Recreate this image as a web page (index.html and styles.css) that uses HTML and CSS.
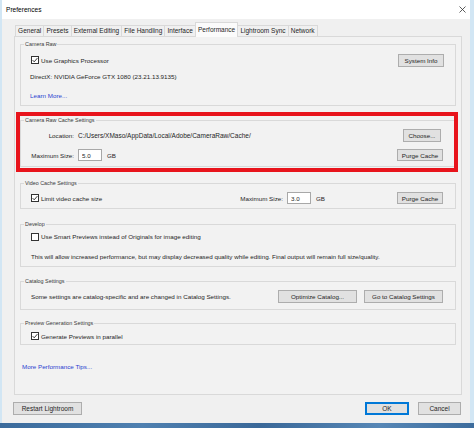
FILE: index.html
```html
<!DOCTYPE html>
<html>
<head>
<meta charset="utf-8">
<link rel="stylesheet" href="styles.css">
</head>
<body>
<div class="screen">
  <div class="window">
    <div class="titlebar">
      <span class="title">Preferences</span>
      <svg class="close" width="7" height="7" viewBox="0 0 7 7"><path d="M0.5 0.5 L6.5 6.5 M6.5 0.5 L0.5 6.5" stroke="#333" stroke-width="0.8" fill="none"/></svg>
    </div>
    <div class="client">
      <div class="tabs">
        <div class="tab">General</div>
        <div class="tab">Presets</div>
        <div class="tab">External Editing</div>
        <div class="tab">File Handling</div>
        <div class="tab">Interface</div>
        <div class="tab active">Performance</div>
        <div class="tab">Lightroom Sync</div>
        <div class="tab">Network</div>
      </div>
      <div class="panel">
        <fieldset class="group g1">
          <legend>Camera Raw</legend>
          <div class="row r1">
            <label class="check"><svg class="box" width="8" height="8" viewBox="0 0 8 8"><rect x="0.5" y="0.5" width="7" height="7" fill="#fff" stroke="#333"/><path d="M1.6 4.1 L3.2 5.8 L6.4 2.1" stroke="#222" stroke-width="0.9" fill="none"/></svg>Use Graphics Processor</label>
            <span class="spacer"></span>
            <button class="btn w46">System Info</button>
          </div>
          <div class="row r2">DirectX: NVIDIA GeForce GTX 1080 (23.21.13.9135)</div>
          <div class="row r3"><a class="link">Learn More...</a></div>
        </fieldset>

        <fieldset class="group g2">
          <legend>Camera Raw Cache Settings</legend>
          <div class="row rc1">
            <span class="lbl">Location:</span>
            <span class="path">C:/Users/XMaso/AppData/Local/Adobe/CameraRaw/Cache/</span>
            <span class="spacer"></span>
            <button class="btn w38 choose">Choose...</button>
          </div>
          <div class="row rc2">
            <span class="lbl">Maximum Size:</span>
            <input class="field" type="text" value="5.0" readonly>
            <span class="unit">GB</span>
            <span class="spacer"></span>
            <button class="btn w46 purge">Purge Cache</button>
          </div>
        </fieldset>

        <fieldset class="group g3">
          <legend>Video Cache Settings</legend>
          <div class="row rv">
            <label class="check"><svg class="box" width="8" height="8" viewBox="0 0 8 8"><rect x="0.5" y="0.5" width="7" height="7" fill="#fff" stroke="#333"/><path d="M1.6 4.1 L3.2 5.8 L6.4 2.1" stroke="#222" stroke-width="0.9" fill="none"/></svg>Limit video cache size</label>
            <span class="spacer"></span>
            <span class="vlbl">Maximum Size:</span>
            <input class="field" type="text" value="3.0" readonly>
            <span class="unit vunit">GB</span>
            <button class="btn w46 purge">Purge Cache</button>
          </div>
        </fieldset>

        <fieldset class="group g4">
          <legend>Develop</legend>
          <div class="row rd1">
            <label class="check"><svg class="box" width="8" height="8" viewBox="0 0 8 8"><rect x="0.5" y="0.5" width="7" height="7" fill="#fff" stroke="#333"/></svg>Use Smart Previews instead of Originals for image editing</label>
          </div>
          <div class="row rd2">This will allow increased performance, but may display decreased quality while editing. Final output will remain full size/quality.</div>
        </fieldset>

        <fieldset class="group g5">
          <legend>Catalog Settings</legend>
          <div class="row rk">
            <span>Some settings are catalog-specific and are changed in Catalog Settings.</span>
            <span class="spacer"></span>
            <button class="btn w79">Optimize Catalog...</button>
            <button class="btn w79 goto">Go to Catalog Settings</button>
          </div>
        </fieldset>

        <fieldset class="group g6">
          <legend>Preview Generation Settings</legend>
          <div class="row rp">
            <label class="check"><svg class="box" width="8" height="8" viewBox="0 0 8 8"><rect x="0.5" y="0.5" width="7" height="7" fill="#fff" stroke="#333"/><path d="M1.6 4.1 L3.2 5.8 L6.4 2.1" stroke="#222" stroke-width="0.9" fill="none"/></svg>Generate Previews in parallel</label>
          </div>
        </fieldset>

        <div class="tips"><a class="link">More Performance Tips...</a></div>
      </div>
      <div class="footer">
        <button class="btn restart">Restart Lightroom</button>
        <span class="spacer"></span>
        <button class="btn ok">OK</button>
        <button class="btn cancel">Cancel</button>
      </div>
    </div>
  </div>
  <div class="taskbar"></div>
  <div class="highlight"></div>
</div>
</body>
</html>
```

FILE: styles.css
```css
* { box-sizing: border-box; }
html, body { margin: 0; padding: 0; }
body {
  font-family: "Liberation Sans", Arial, sans-serif;
  font-size: 6.25px;
  color: #1e1e1e;
  background: #d2e6f4;
}
.screen {
  position: relative;
  width: 474px;
  height: 428px;
  overflow: hidden;
  background: #d2e6f4;
}
.window {
  margin-left: 2px;
  width: 468px;
  height: 423px;
  background: #f0f0f0;
}
.titlebar {
  height: 19px;
  background: #ffffff;
  display: flex;
  align-items: center;
  padding: 0 4px 0 4px;
}
.title { font-size: 6.6px; color: #000; }
.close { margin-left: auto; }
.client {
  height: 404px;
  padding: 3px 8px 0 12px;
}
.tabs {
  display: flex;
  align-items: flex-end;
  height: 14px;
  padding-left: 1px;
}
.tab {
  height: 11px;
  line-height: 10px;
  font-size: 6.5px;
  padding: 0 2.1px;
  border: 1px solid #d9d9d9;
  border-bottom: none;
  margin-left: -1px;
  background: #f0f0f0;
  white-space: nowrap;
  position: relative;
}
.tab:first-child { margin-left: 0; }
.tab.active {
  height: 15px;
  line-height: 13px;
  margin-bottom: -1px;
  background: #fbfbfb;
  z-index: 2;
}
.panel {
  position: relative;
  z-index: 1;
  height: 359px;
  border: 1px solid #d9d9d9;
  background: #f2f2f2;
  padding: 3px 5px 0 5px;
}
.group {
  margin: 0;
  padding: 0 0 0 0;
  border: 1px solid #d9d9d9;
  min-inline-size: 0;
}
.group legend {
  font-size: 5.4px;
  line-height: 8px;
  height: 8px;
  color: #3a3a3a;
  padding: 0 1px;
  margin-left: 3px;
}
.row {
  display: flex;
  align-items: center;
  padding: 0 11px 0 9px;
  white-space: nowrap;
}
.spacer { flex: 1; }
.r1 { margin-top: 5px; height: 14px; }
.r2 { height: 18px; }
.r3 { height: 20px; }
.g2 { margin-top: 10px; padding-bottom: 4px; }
.rc1 { margin-top: 4px; height: 14px; }
.rc2 { margin-top: 6px; height: 14px; }
.g3 { margin-top: 12px; padding-bottom: 3px; }
.rv { margin-top: 4px; height: 14px; }
.g4 { margin-top: 11px; padding-bottom: 3px; }
.rd1 { margin-top: 2px; height: 13px; }
.rd2 { margin-top: 6px; height: 14px; padding-left: 10px; }
.g5 { margin-top: 10px; padding-bottom: 6px; }
.rk { margin-top: 4px; height: 14px; padding-left: 10px; }
.g6 { margin-top: 9px; padding-bottom: 2px; }
.rp { margin-top: 3px; height: 12px; }

.check { display: flex; align-items: center; }
.box { margin: 0 2px 0 1px; flex: none; }
.link { color: #2a3fd0; text-decoration: none; cursor: pointer; }
.lbl { width: 44px; text-align: right; flex: none; }
.path { margin-left: 4px; font-size: 6.5px; }
.field {
  width: 24px;
  height: 12px;
  margin: 0 0 0 4px;
  padding: 0 0 0 3px;
  border: 1px solid #a8a8a8;
  background: #fff;
  font-family: inherit;
  font-size: 6.25px;
  color: #1e1e1e;
  outline: none;
}
.unit { margin-left: 5px; }
.vunit { width: 81px; }
.btn {
  height: 13px;
  padding: 0;
  margin: 0;
  border: 1px solid #adadad;
  background: #e1e1e1;
  font-family: inherit;
  font-size: 6.25px;
  color: #1e1e1e;
  line-height: 11px;
  text-align: center;
  white-space: nowrap;
}
.w46 { width: 46px; }
.w38 { width: 38px; }
.w79 { width: 79px; }
.choose { margin-right: 3px; }
.purge { height: 12px; margin-right: 1px; }
.goto { margin-left: 7px; margin-right: 1px; }
.tips { margin-top: 16px; height: 12px; line-height: 12px; padding-left: 2px; }
.footer {
  display: flex;
  margin-top: 7px;
  height: 13px;
}
.restart { width: 69px; margin-left: -1px; font-size: 6.5px; }
.ok { width: 44px; border: 1px solid #0078d7; box-shadow: inset 0 0 0 1px #0078d7; font-size: 6.5px; }
.cancel { width: 43px; margin-left: 9px; margin-right: 1px; font-size: 6.5px; }
.taskbar {
  height: 5px;
  background: linear-gradient(90deg, #3b6b9c 0%, #4f80b0 30%, #3a6898 55%, #5787b6 80%, #3d6c9c 100%);
}
.highlight {
  position: absolute;
  z-index: 10;
  left: 16px;
  top: 112px;
  width: 442px;
  height: 60px;
  border: 4px solid #e8141c;
  pointer-events: none;
}
```
